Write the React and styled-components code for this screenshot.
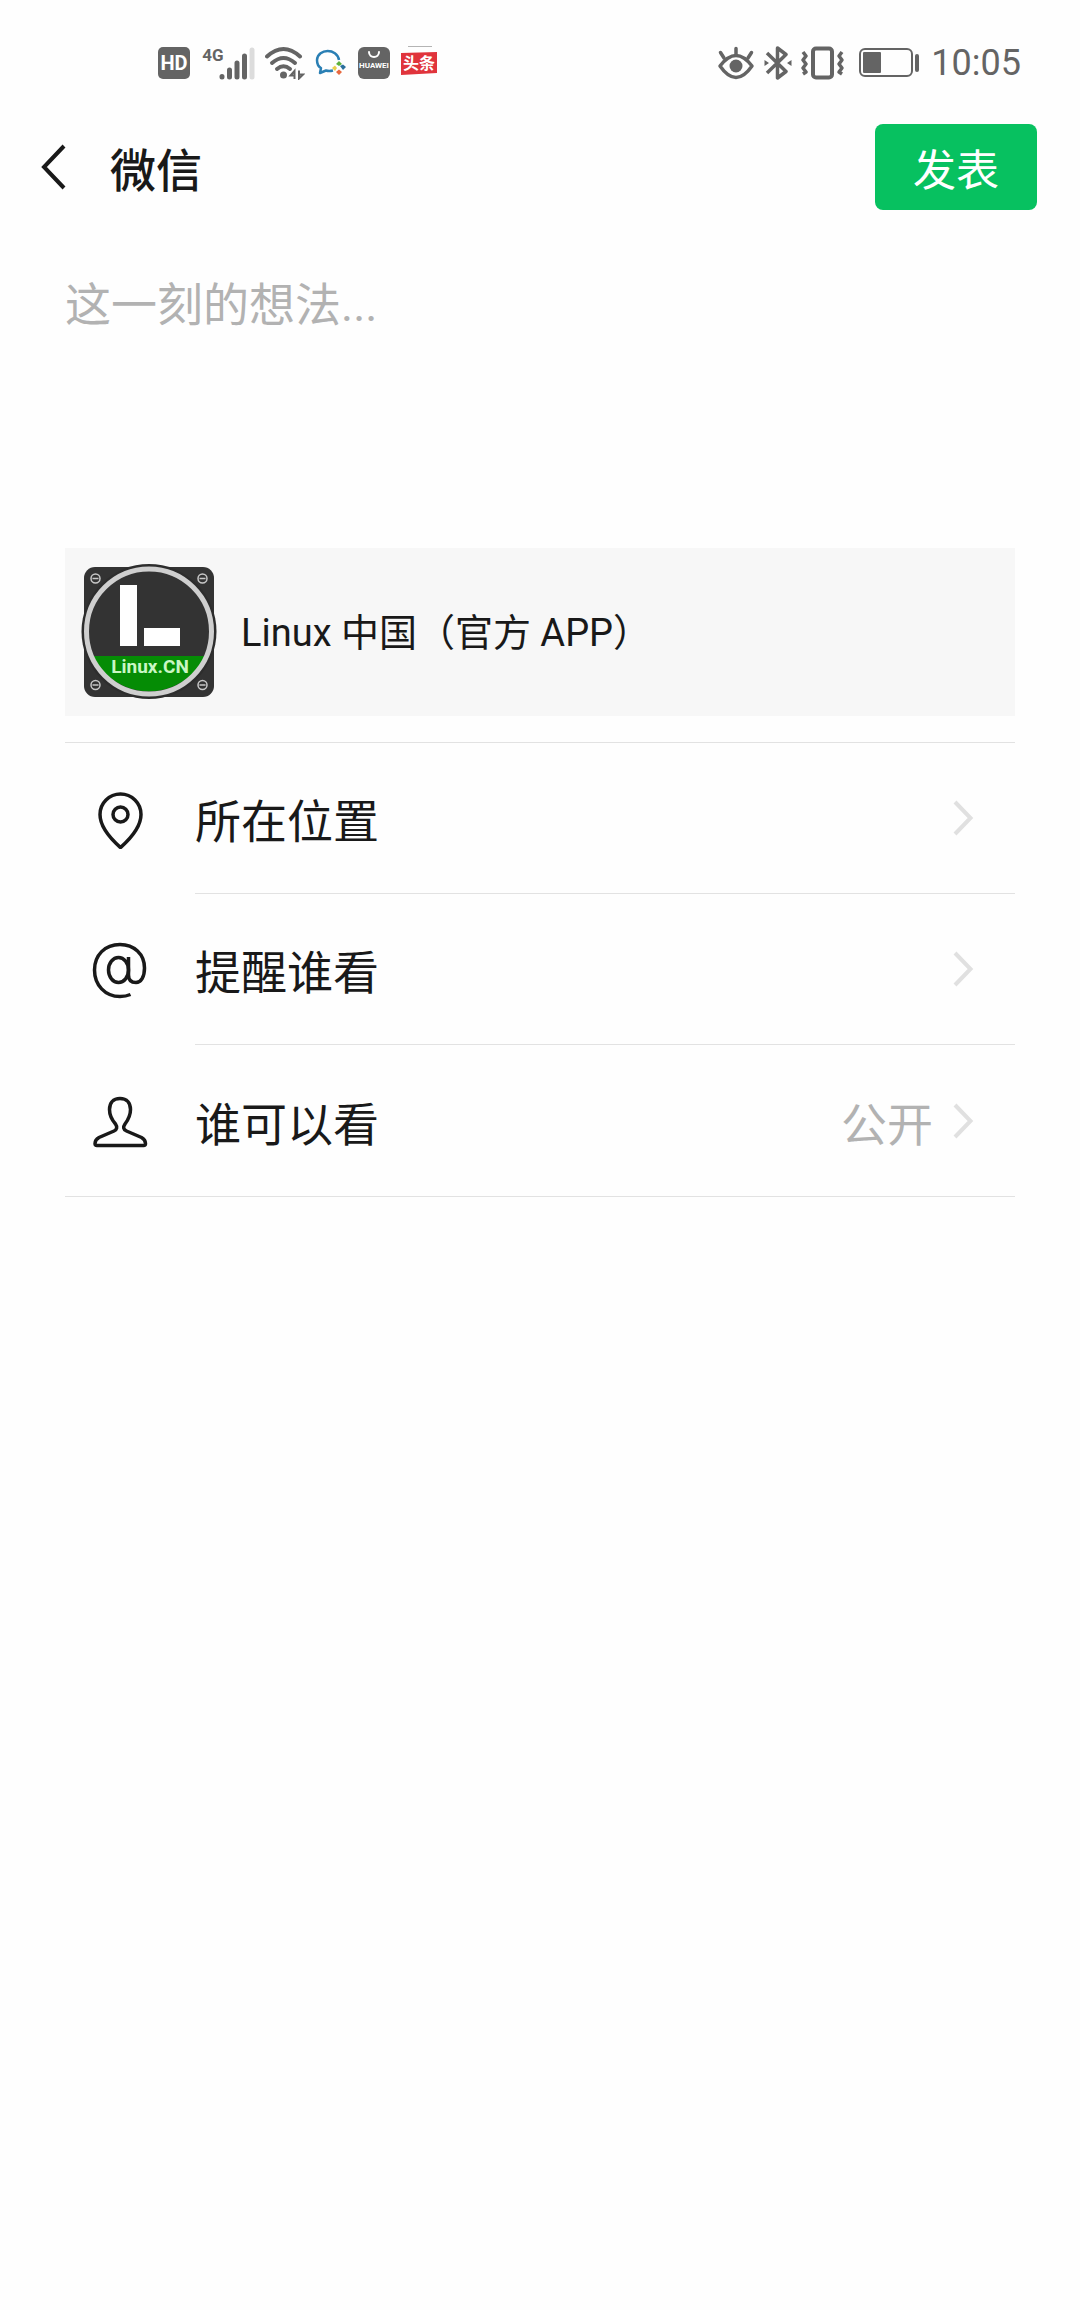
import React, { useState } from "react";
//Styling
import styled, { createGlobalStyle } from "styled-components";

const App = () => {
  const [text, setText] = useState("");
  return (
    <>
      <GlobalStyle />
      <Page>
        <StatusBar>
          <StatusGroup $gap={10}>
            <HdIcon />
            <SignalIcon />
            <WifiIcon />
            <WeComIcon />
            <HuaweiIcon />
            <ToutiaoIcon />
          </StatusGroup>
          <StatusGroup $gap={8}>
            <EyeIcon />
            <BluetoothIcon />
            <VibrateIcon />
            <BatteryIcon />
            <Time>10:05</Time>
          </StatusGroup>
        </StatusBar>
        <Header>
          <BackButton type="button" aria-label="返回">
            <svg width="28" height="48" viewBox="0 0 28 48">
              <path
                d="M24 3 L4 24 L24 45"
                fill="none"
                stroke="#191919"
                strokeWidth="4"
              />
            </svg>
          </BackButton>
          <Title>微信</Title>
          <PublishButton type="button">发表</PublishButton>
        </Header>
        <Main>
          <Thought
            rows={4}
            aria-label="这一刻的想法"
            placeholder="这一刻的想法..."
            value={text}
            onChange={(e) => setText(e.target.value)}
          />
          <ShareCard href="#share">
            <LinuxLogo />
            <ShareTitle>Linux 中国（官方 APP）</ShareTitle>
          </ShareCard>
          <Options>
            {options.map(({ label, value, Icon }) => (
              <Option key={label}>
                <OptionButton type="button">
                  <OptionIcon>
                    <Icon />
                  </OptionIcon>
                  <OptionBody>
                    <OptionLabel>{label}</OptionLabel>
                    {value && <OptionValue>{value}</OptionValue>}
                    <ArrowIcon />
                  </OptionBody>
                </OptionButton>
              </Option>
            ))}
          </Options>
        </Main>
      </Page>
    </>
  );
};

//Status icons
const HdIcon = () => (
  <svg width="34" height="34" viewBox="0 0 34 34">
    <rect x="1" y="1" width="32" height="32" rx="5" fill="#646464" />
    <IconText x="17" y="24" $size={20} $weight={700} fill="#fff">
      HD
    </IconText>
  </svg>
);
const SignalIcon = () => (
  <svg width="54" height="34" viewBox="0 0 54 34">
    <IconText x="12" y="15" $size={17} $weight={700} fill="#646464">
      4G
    </IconText>
    <g stroke="#646464" strokeWidth="5" strokeLinecap="round">
      <path d="M21 30.5V31M28.500 24V31M36 17V31M43.500 10V31" />
      <path d="M51 4V31" stroke="#dcdcdc" />
    </g>
  </svg>
);
const WifiIcon = () => (
  <svg width="40" height="34" viewBox="0 0 40 34">
    <g fill="none" stroke="#646464" strokeWidth="4" strokeLinecap="round">
      <path d="M2 10.500Q18.500 -4.500 35 10.500" />
      <path d="M7 17Q18.500 7 30 17" />
      <path d="M12 23Q18.500 17.500 25 23" />
    </g>
    <circle cx="18.500" cy="29" r="3.500" fill="#646464" />
    <path
      d="M29.500 33V25L25.500 29.500H30M34 24.500V32.500L38 28.500H33.500"
      fill="none"
      stroke="#646464"
      strokeWidth="2"
    />
  </svg>
);
const WeComIcon = () => (
  <svg width="32" height="34" viewBox="0 0 32 34">
    <path
      d="M24 14C22 2 3 2 2 14C2 18 4 21 6 22L5 27L11 24.500C14 25.500 16 25 18 24.500"
      fill="none"
      stroke="#2a7fb4"
      strokeWidth="2.500"
      strokeLinejoin="round"
    />
    <path d="M21 18L24 15L27 18L24 20Z" fill="#5cb03c" />
    <path d="M25 20L28 18.500L31 21L28 24Z" fill="#2a6f9c" />
    <path d="M21 26L24 23.500L27 26L24 29Z" fill="#e8693f" />
    <path d="M17 22L20 19.500L22 22L20 25Z" fill="#e9cf4a" />
  </svg>
);
const HuaweiIcon = () => (
  <svg width="34" height="34" viewBox="0 0 34 34">
    <rect x="1" y="1" width="32" height="32" rx="6" fill="#646464" />
    <path
      d="M12 6C12 12.500 22 12.500 22 6"
      fill="none"
      stroke="#fff"
      strokeWidth="2"
      strokeLinecap="round"
    />
    <IconText x="17" y="22" $size={8} $weight={700} fill="#fff">
      HUAWEI
    </IconText>
  </svg>
);
const ToutiaoIcon = () => (
  <svg width="36" height="34" viewBox="0 0 36 34">
    <path d="M7 0.500H31" stroke="#b4b4b4" />
    <path d="M0 7L36 6V27L0 29Z" fill="#e0343c" />
    <IconText x="18" y="23" $size={16} $weight={700} fill="#fff">
      头条
    </IconText>
  </svg>
);
const EyeIcon = () => (
  <svg width="38" height="34" viewBox="0 0 38 34">
    <g fill="none" stroke="#646464" strokeWidth="3.500" strokeLinecap="round">
      <path d="M3 20Q19 -1 35 20Q19 43 3 20Z" strokeLinejoin="round" />
      <path d="M19 9V2.500M7 12L3.500 6.500M31 12L34.500 6.500" />
    </g>
    <circle cx="19" cy="20" r="6.500" fill="#646464" />
  </svg>
);
const BluetoothIcon = () => (
  <svg width="30" height="34" viewBox="0 0 30 34">
    <path
      d="M4 7L23 25.500L14.500 32V2L23 8.500L4 27"
      fill="none"
      stroke="#646464"
      strokeWidth="3.500"
      strokeLinejoin="round"
    />
    <path d="M1.500 14L6 17L1.500 20ZM28.500 14L24 17L28.500 20Z" fill="#646464" />
  </svg>
);
const VibrateIcon = () => (
  <svg width="50" height="34" viewBox="0 0 50 34">
    <g fill="none" stroke="#646464" strokeWidth="4" strokeLinejoin="round">
      <rect x="12" y="2.500" width="19" height="29" rx="3" />
      <path d="M2 6L5 10L2 14L5 18L2 22L5 26L2 28" strokeWidth="3.500" />
      <path d="M41 6L38 10L41 14L38 18L41 22L38 26L41 28" strokeWidth="3.500" />
    </g>
  </svg>
);
const BatteryIcon = () => (
  <svg width="64" height="34" viewBox="0 0 64 34">
    <rect
      x="1"
      y="3"
      width="52"
      height="27"
      rx="5"
      fill="none"
      stroke="#646464"
      strokeWidth="2"
    />
    <rect x="4" y="6" width="18" height="21" rx="1" fill="#646464" />
    <rect x="56" y="8" width="4" height="18" rx="2" fill="#646464" />
  </svg>
);

//Content icons
const LinuxLogo = () => (
  <svg width="136" height="136" viewBox="0 0 136 136">
    <rect x="3" y="3" width="130" height="130" rx="11" fill="#333" />
    {[
      [14.5, 14.5],
      [121.5, 14.5],
      [14.5, 121],
      [121.5, 121],
    ].map(([x, y]) => (
      <g key={`${x}-${y}`} fill="none" stroke="#c8c8c8" strokeWidth="1.500">
        <circle cx={x} cy={y} r="4.500" />
        <path d={`M${x - 3} ${y}h6`} />
      </g>
    ))}
    <circle cx="68" cy="67.500" r="67.500" fill="#2d2d2d" />
    <circle cx="68" cy="67.500" r="62.500" fill="#333" />
    <path d="M12 92H124A62 62 0 0 1 12 92Z" fill="#058c05" />
    <circle
      cx="68"
      cy="67.500"
      r="62.500"
      fill="none"
      stroke="#cfcfcf"
      strokeWidth="5"
    />
    <path d="M39 21H56V82H39ZM63 64H99V82H63Z" fill="#fff" />
    <IconText x="69" y="109" $size={19} $weight={700} fill="#c9f7c4">
      Linux.CN
    </IconText>
  </svg>
);
const LocationIcon = () => (
  <svg width="56" height="60" viewBox="0 0 56 60">
    <g fill="none" stroke="#191919" strokeWidth="3.500" strokeLinejoin="round">
      <path d="M28.500 58.500C24 54.500 8 40.500 8 25.500A20.500 20.500 0 0 1 49 25.500C49 40.500 33 54.500 28.500 58.500Z" />
      <circle cx="28.500" cy="25.500" r="7.500" />
    </g>
  </svg>
);
const MentionIcon = () => (
  <svg width="56" height="60" viewBox="0 0 56 60">
    <g fill="none" stroke="#191919" strokeWidth="3.500">
      <path d="M38.500 54.500C35 56 31.500 56.500 28 56.500C13 56.500 2.500 45 2.500 30C2.500 15 13 4.500 28 4.500C42 4.500 52.500 14 52.500 28C52.500 37 49 42.500 44 42.500C39 42.500 36.500 40 36.500 35V17" />
      <ellipse cx="26.500" cy="30" rx="10" ry="12.500" />
    </g>
  </svg>
);
const PersonIcon = () => (
  <svg width="56" height="60" viewBox="0 0 56 60">
    <path
      d="M28 7.500C21 7.500 17.500 12 17.500 18.500C17.500 25 20 29 23.500 33C25.500 36 25 38.500 22 40L7 46.500C3.500 48.500 3 50.500 3 52.500Q3 54.500 5 54.500H51.500Q53.500 54.500 53.500 52.500C53.500 50.500 53 48.500 49.500 46.500L34.500 40C31 38.500 31 36 33 33C36 29 38.500 25 38.500 18.500C38.500 12 35 7.500 28 7.500Z"
      fill="none"
      stroke="#191919"
      strokeWidth="3.500"
    />
  </svg>
);
const ArrowIcon = () => (
  <svg width="22" height="36" viewBox="0 0 22 36">
    <path
      d="M2 2L17.500 18L2 34"
      fill="none"
      stroke="#e0e0e0"
      strokeWidth="4"
    />
  </svg>
);

const options = [
  { label: "所在位置", Icon: LocationIcon },
  { label: "提醒谁看", Icon: MentionIcon },
  { label: "谁可以看", value: "公开", Icon: PersonIcon },
];

const GlobalStyle = createGlobalStyle`
  * {
    margin: 0;
    padding: 0;
    box-sizing: border-box;
  }
  body {
    background-color: #fefefe;
    color: #191919;
    font-family: Roboto, "Noto Sans CJK SC", sans-serif;
  }
  button, textarea {
    border: none;
    background: none;
    color: inherit;
    font-family: inherit;
  }
  svg {
    display: block;
    flex-shrink: 0;
  }
`;
const Page = styled.div`
  min-height: 100vh;
`;
const StatusBar = styled.div`
  display: flex;
  justify-content: space-between;
  height: 124px;
  padding: 2px 59px 0 157px;
`;
const StatusGroup = styled.div`
  display: flex;
  align-items: center;
  gap: ${({ $gap }) => $gap}px;
`;
const IconText = styled.text`
  font-family: Roboto, "Noto Sans CJK SC", sans-serif;
  font-size: ${({ $size }) => $size}px;
  font-weight: ${({ $weight }) => $weight};
  text-anchor: middle;
`;
const Time = styled.span`
  color: #646464;
  font-size: 36px;
  line-height: 44px;
`;
const Header = styled.header`
  display: flex;
  align-items: center;
  padding: 0 43px 0 40px;
  font-family: "Noto Sans CJK SC", sans-serif;
`;
const BackButton = styled.button`
  margin-right: 42px;
`;
const Title = styled.h1`
  flex: 1;
  font-size: 46px;
  font-weight: 500;
  line-height: 66px;
`;
const PublishButton = styled.button`
  padding: 10px 38px;
  border-radius: 8px;
  background-color: #07c160;
  color: #fff;
  font-size: 43px;
  line-height: 66px;
`;
const Main = styled.main`
  padding: 62px 65px;
`;
const Thought = styled.textarea`
  display: block;
  width: 100%;
  margin-bottom: 12px;
  outline: none;
  resize: none;
  font-size: 46px;
  line-height: 66px;
  &::placeholder {
    color: #b2b2b2;
  }
`;
const ShareCard = styled.a`
  display: flex;
  align-items: center;
  gap: 24px;
  padding: 16px;
  background-color: #f7f7f7;
  color: inherit;
  text-decoration: none;
`;
const ShareTitle = styled.span`
  padding-top: 2px;
  font-size: 38px;
  line-height: 56px;
`;
const Options = styled.ul`
  margin-top: 26px;
  border-top: 1px solid #e2e2e2;
  font-family: "Noto Sans CJK SC", sans-serif;
  list-style: none;
`;
const OptionBody = styled.span`
  flex: 1;
  display: flex;
  align-items: center;
  gap: 20px;
  height: 151px;
  padding-right: 40px;
  border-bottom: 1px solid #e2e2e2;
`;
const Option = styled.li`
  &:last-child {
    border-bottom: 1px solid #e2e2e2;
  }
  &:last-child ${OptionBody} {
    border-bottom: none;
  }
`;
const OptionButton = styled.button`
  display: flex;
  align-items: center;
  width: 100%;
  text-align: left;
`;
const OptionIcon = styled.span`
  width: 130px;
  padding-left: 27px;
`;
const OptionLabel = styled.span`
  flex: 1;
  font-size: 46px;
  line-height: 66px;
`;
const OptionValue = styled.span`
  color: #b2b2b2;
  font-size: 46px;
  line-height: 66px;
`;

export default App;
